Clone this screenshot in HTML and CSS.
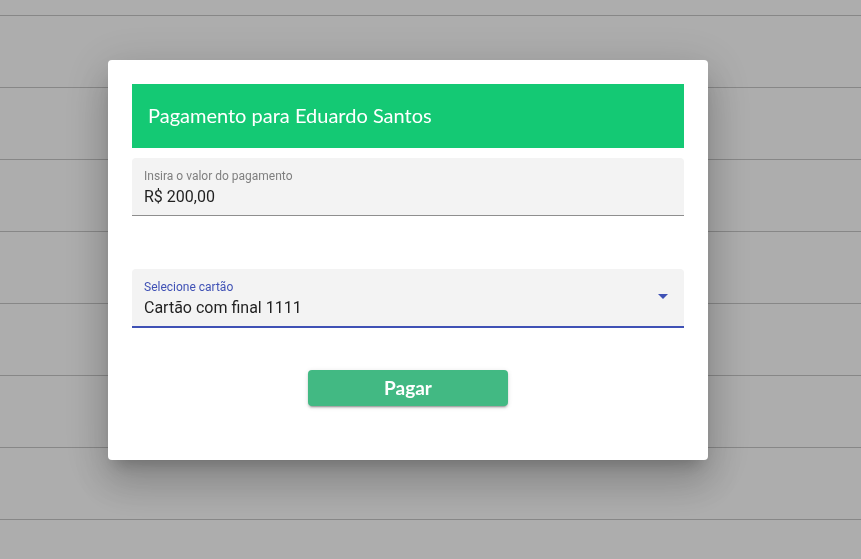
FILE: index.html
```html
<!DOCTYPE html>
<html lang="pt-BR">
<head>
<meta charset="utf-8">
<title>Pagamento</title>
<link rel="stylesheet" href="styles.css">
</head>
<body>
<div class="page">
  <div class="rows">
    <div class="row first"></div>
    <div class="row"></div>
    <div class="row"></div>
    <div class="row"></div>
    <div class="row"></div>
    <div class="row"></div>
    <div class="row"></div>
    <div class="row"></div>
  </div>
</div>
<div class="overlay">
  <div class="dialog">
    <div class="dialog-header">Pagamento para Eduardo Santos</div>
    <div class="field">
      <div class="field-label">Insira o valor do pagamento</div>
      <div class="field-value">R$ 200,00</div>
    </div>
    <div class="field select focused">
      <div class="field-text">
        <div class="field-label">Selecione cartão</div>
        <div class="field-value">Cartão com final 1111</div>
      </div>
      <span class="arrow"></span>
    </div>
    <div class="actions">
      <button class="pay-btn" type="button">Pagar</button>
    </div>
  </div>
</div>
</body>
</html>
```

FILE: styles.css
```css
* { box-sizing: border-box; }
html, body {
  margin: 0;
  padding: 0;
  height: 100%;
  overflow: hidden;
}
body {
  font-family: Roboto, "Liberation Sans", sans-serif;
  background: #fff;
}
.page {
  height: 100%;
}
.rows {
  display: flex;
  flex-direction: column;
}
.row {
  height: 72px;
  border-bottom: 1px solid #c8c8c8;
  flex-shrink: 0;
}
.row.first {
  height: 16px;
}
.overlay {
  position: fixed;
  inset: 0;
  background: rgba(0, 0, 0, 0.32);
  padding: 60px 0 0 108px;
}
.dialog {
  width: 600px;
  height: 400px;
  background: #fff;
  border-radius: 4px;
  padding: 24px;
  box-shadow: 0 11px 15px -7px rgba(0,0,0,.2), 0 24px 38px 3px rgba(0,0,0,.14), 0 9px 46px 8px rgba(0,0,0,.12);
  display: flex;
  flex-direction: column;
}
.dialog-header {
  height: 64px;
  background: #14c974;
  color: #fff;
  font-family: Lato, "Open Sans", sans-serif;
  font-size: 20px;
  display: flex;
  align-items: center;
  padding: 0 16px 2px 16px;
  letter-spacing: 0;
}
.field {
  margin-top: 10px;
  height: 58px;
  background: #f3f3f3;
  border-radius: 4px 4px 0 0;
  border-bottom: 1px solid #8e8e8e;
  padding: 11px 12px 0 12px;
}
.field.select {
  margin-top: 53px;
  height: 59px;
  display: flex;
  align-items: flex-start;
  justify-content: space-between;
  padding-right: 16px;
}
.field.focused {
  border-bottom: 2px solid #3f51b5;
}
.field-label {
  font-size: 12px;
  line-height: 14px;
  color: #7f7f7f;
}
.focused .field-label {
  color: #3f51b5;
}
.field-value {
  margin-top: 4px;
  font-size: 16px;
  line-height: 20px;
  color: rgba(0,0,0,.87);
}
.arrow {
  margin-top: 14px;
  width: 0;
  height: 0;
  border-left: 5px solid transparent;
  border-right: 5px solid transparent;
  border-top: 5px solid #3f51b5;
}
.actions {
  margin-top: 42px;
  display: flex;
  justify-content: center;
}
.pay-btn {
  width: 200px;
  height: 36px;
  border: none;
  border-radius: 4px;
  background: #42b983;
  color: #fff;
  font-family: Lato, "Open Sans", sans-serif;
  font-weight: 700;
  font-size: 19px;
  box-shadow: 0 3px 1px -2px rgba(0,0,0,.2), 0 2px 2px 0 rgba(0,0,0,.14), 0 1px 5px 0 rgba(0,0,0,.12);
  cursor: pointer;
  padding: 0 0 1px 0;
}
```
